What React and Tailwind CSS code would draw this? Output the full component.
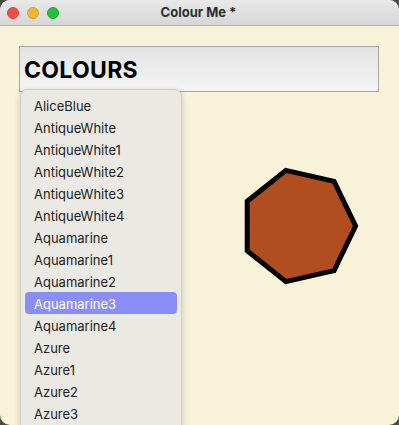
import React from "react";

const colours = [
  "AliceBlue",
  "AntiqueWhite",
  "AntiqueWhite1",
  "AntiqueWhite2",
  "AntiqueWhite3",
  "AntiqueWhite4",
  "Aquamarine",
  "Aquamarine1",
  "Aquamarine2",
  "Aquamarine3",
  "Aquamarine4",
  "Azure",
  "Azure1",
  "Azure2",
  "Azure3",
];

export default function App() {
  const selected = "Aquamarine3";

  return (
    <div className="w-[399px] h-[425px] bg-[#4a4a4a] overflow-hidden font-['Inter','Liberation_Sans',sans-serif]">
      <div className="w-full h-full rounded-[10px] overflow-hidden flex flex-col bg-[#f8f2d9]">
        {/* Title bar */}
        <div className="h-[26px] shrink-0 flex items-center px-[7px] bg-gradient-to-b from-[#e9e9e9] to-[#d6d6d6] border-b border-[#b4b4b4] relative">
          <div className="flex gap-[8px]">
            <span className="w-[12px] h-[12px] rounded-full bg-[#ee4f4b] border border-[#d8413d]" />
            <span className="w-[12px] h-[12px] rounded-full bg-[#f0b531] border border-[#d89e24]" />
            <span className="w-[12px] h-[12px] rounded-full bg-[#1ec23e] border border-[#17a833]" />
          </div>
          <div className="flex-1 text-center text-[13px] font-bold text-[#2e2e2e] pr-[54px] pt-[1px]">
            Colour Me *
          </div>
        </div>

        {/* Content */}
        <div className="flex-1 relative pt-[20px] pl-[19px]">
          <div className="w-[360px] h-[46px] border border-[#a6a6a6] bg-gradient-to-b from-[#e4e4e4] to-[#f4f4f4] flex items-center px-[4px] pt-[3px]">
            <span className="text-[23px] font-bold text-black tracking-[0.3px]">COLOURS</span>
          </div>

          {/* Heptagon */}
          <svg
            className="absolute left-[234px] top-[135px]"
            width="130"
            height="130"
            viewBox="0 0 130 130"
          >
            <polygon
              points="121.6,65 100.1,109.6 51.9,120.6 13.2,89.7 13.2,40.3 51.9,9.4 100.1,20.4"
              fill="#b04e1f"
              stroke="#000"
              strokeWidth="5"
              strokeLinejoin="miter"
            />
          </svg>

          {/* Dropdown popup */}
          <div className="absolute left-[20px] top-[63px] w-[162px] h-[380px] rounded-[7px] bg-[#ebe9e3] border border-[#cfcdc8] shadow-[0_2px_6px_rgba(0,0,0,0.18)] pt-[4px] px-[4px]">
            {colours.map((c) => (
              <div
                key={c}
                className={
                  c === selected
                    ? "h-[22px] flex items-center pl-[9px] pt-[4px] rounded-[4px] bg-[#8a8ef9] text-white text-[13px]"
                    : "h-[22px] flex items-center pl-[9px] pt-[4px] text-[#222] text-[13px]"
                }
              >
                {c}
              </div>
            ))}
          </div>
        </div>
      </div>
    </div>
  );
}
